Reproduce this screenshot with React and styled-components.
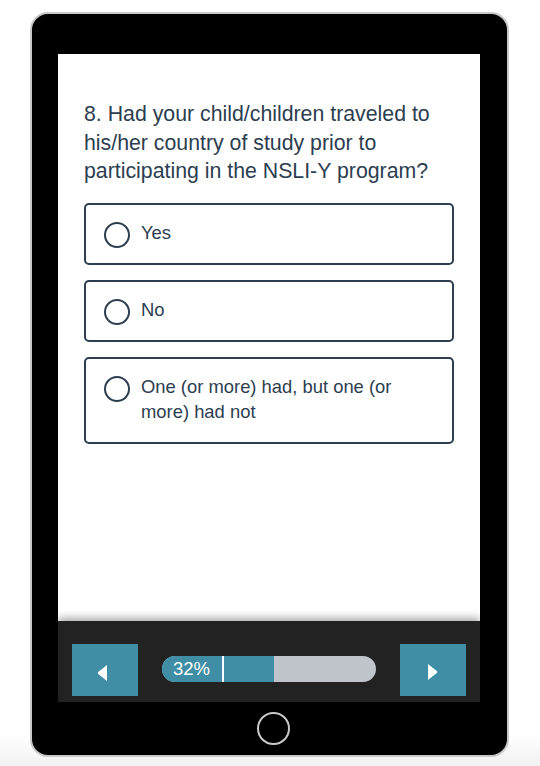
import React from "react";
import styled, { createGlobalStyle } from "styled-components";

const Global = createGlobalStyle`
  html, body { margin: 0; padding: 0; background: #ffffff; }
  body { font-family: "Liberation Sans", Arial, Helvetica, sans-serif; }
  * { box-sizing: border-box; }
`;

const Page = styled.div`
  width: 540px;
  height: 766px;
  padding: 12px 0 0 30px;
  background: linear-gradient(180deg, #ffffff 0%, #ffffff 96%, #f1f1f1 100%);
  overflow: hidden;
`;

const Device = styled.div`
  width: 479px;
  height: 745px;
  background: #000;
  border: 2px solid #c8c8c8;
  border-radius: 18px;
  padding: 40px 0 0 26px;
  display: flex;
  flex-direction: column;
`;

const Screen = styled.div`
  width: 422px;
  display: flex;
  flex-direction: column;
`;

const Content = styled.div`
  height: 567px;
  background: #fff;
  padding: 46px 26px 0 26px;
  color: #2c3e50;
`;

const Question = styled.div`
  font-size: 21.3px;
  line-height: 28.5px;
  margin-bottom: 17px;
`;

const Options = styled.div`
  display: flex;
  flex-direction: column;
  gap: 15px;
`;

const Option = styled.label`
  display: flex;
  align-items: flex-start;
  gap: 11px;
  border: 2px solid #2c3e50;
  border-radius: 5px;
  padding: 15px 16px 18px 18px;
  font-size: 18.4px;
  line-height: 25px;
  cursor: pointer;
`;

const Radio = styled.span`
  flex: none;
  width: 26px;
  height: 26px;
  margin: 2px 0 -3px 0;
  border: 2.5px solid #2c3e50;
  border-radius: 50%;
`;

const Bar = styled.div`
  height: 81px;
  background: #222222;
  padding: 23px 14px 0 14px;
  display: flex;
  align-items: flex-start;
  gap: 24px;
  box-shadow: 0 -3px 8px rgba(0, 0, 0, 0.35);
`;

const NavButton = styled.button`
  width: 66px;
  height: 52px;
  border: none;
  background: #3f8ea5;
  display: flex;
  align-items: center;
  justify-content: center;
  padding: ${(p) => (p.$dir === "left" ? "6px 7px 0 0" : "4px 0 0 0")};
  cursor: pointer;
`;

const Progress = styled.div`
  position: relative;
  width: 214px;
  height: 26px;
  margin-top: 12px;
  border-radius: 13px;
  background: #c0c4cb;
  overflow: hidden;
`;

const Fill = styled.div`
  height: 100%;
  background: #3f8ea5;
  display: flex;
  align-items: center;
  padding-left: 11px;
  color: #fff;
  font-size: 18.5px;
`;

const Marker = styled.span`
  position: absolute;
  top: 0;
  bottom: 0;
  width: 2px;
  background: #fff;
`;

const HomeArea = styled.div`
  width: 475px;
  margin-left: -26px;
  display: flex;
  justify-content: center;
  padding: 10px 0 0 8px;
`;

const HomeButton = styled.div`
  width: 33px;
  height: 33px;
  border: 2px solid #c8c8c8;
  border-radius: 50%;
`;

const Caret = ({ dir }) =>
  dir === "left" ? (
    <svg width="10" height="16" viewBox="0 0 10 16">
      <path d="M10 0 L10 16 L1.2 9 Q0 8 1.2 7 Z" fill="#fff" />
    </svg>
  ) : (
    <svg width="10" height="16" viewBox="0 0 10 16">
      <path d="M0 0 L0 16 L8.8 9 Q10 8 8.8 7 Z" fill="#fff" />
    </svg>
  );

const options = ["Yes", "No", "One (or more) had, but one (or more) had not"];

export default function App() {
  return (
    <>
      <Global />
      <Page>
        <Device>
          <Screen>
            <Content>
              <Question>
                8. Had your child/children traveled to his/her country of study
                prior to participating in the NSLI-Y program?
              </Question>
              <Options>
                {options.map((o) => (
                  <Option key={o}>
                    <Radio />
                    <span>{o}</span>
                  </Option>
                ))}
              </Options>
            </Content>
            <Bar>
              <NavButton $dir="left" aria-label="Previous">
                <Caret dir="left" />
              </NavButton>
              <Progress>
                <Fill style={{ width: "112px" }}>32%</Fill>
                <Marker style={{ left: "60px" }} />
              </Progress>
              <NavButton $dir="right" aria-label="Next">
                <Caret dir="right" />
              </NavButton>
            </Bar>
          </Screen>
          <HomeArea>
            <HomeButton />
          </HomeArea>
        </Device>
      </Page>
    </>
  );
}
